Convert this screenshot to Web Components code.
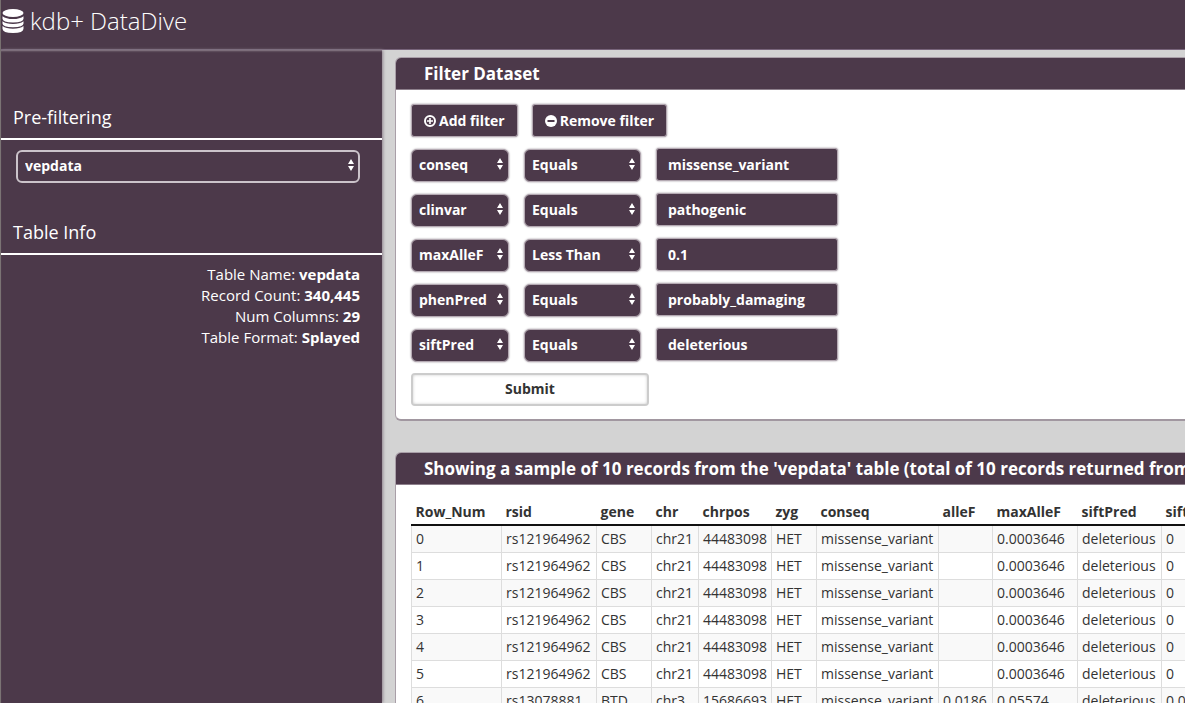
<!DOCTYPE html>
<html lang="en">
<head>
<meta charset="utf-8">
<title>kdb+ DataDive</title>
<style>
  html, body { margin: 0; height: 100%; }
  body { overflow: hidden; font-family: "Open Sans", sans-serif; font-size: 14px; --plum: #4c394a; --line: #b5aab3; --glow: 0 0 2px #8d808c; }
</style>
</head>
<body>
<data-dive></data-dive>
<script>
const define = (name, html, setup) => {
  const template = document.createElement('template');
  template.innerHTML = html;
  customElements.define(name, class extends HTMLElement {
    constructor() {
      super();
      this.attachShadow({ mode: 'open' }).append(template.content.cloneNode(true));
    }
    connectedCallback() { if (setup) setup(this, this.shadowRoot); }
  });
};

define('app-header', `
<style>
  :host { display: block; background: var(--plum); color: #fff; border-bottom: 1px solid #77647a; }
  h1 { display: flex; align-items: center; gap: 6px; margin: 0; padding: 4px 1px 12px; font-size: 24px; line-height: 33px; font-weight: 300; }
  svg { display: block; width: 22px; height: 26px; }
</style>
<h1>
  <svg viewBox="0 0 22 26" fill="#fff" aria-hidden="true">
    <ellipse cx="11" cy="5" rx="10.5" ry="4"/>
    <path d="M.5 8.200q3.500 2.800 10.500 2.800t10.500-2.800v2.600q0 3.700-10.500 3.700T.5 10.800z"/>
    <path d="M.5 13.200q3.500 2.700 10.500 2.700t10.500-2.700v2.400q0 3.700-10.500 3.700T.5 15.600z"/>
    <path d="M.5 18q3.500 2.700 10.500 2.700T21.500 18v2.800q0 4.200-10.500 4.200T.5 20.800z"/>
  </svg>
  <slot></slot>
</h1>`);

define('side-section', `
<style>
  :host { display: block; }
  h2 { margin: 0; padding: 0 12px 9px; font-size: 18px; line-height: 24px; font-weight: 400; border-bottom: 2px solid #fff; }
</style>
<h2><slot name="title"></slot></h2>
<slot></slot>`);

define('pick-list', `
<style>
  :host { display: block; position: relative; }
  select { appearance: none; display: block; box-sizing: border-box; width: 100%; height: 33px; margin: 0; padding: 0 20px 2px 7px;
    font: 700 14px/20px "Open Sans", sans-serif; color: #fff; background: var(--plum); border: 1px solid var(--line); border-radius: 6px; box-shadow: var(--glow); }
  :host([outlined]) select { border: 2px solid #cbc3ca; box-shadow: none; }
  svg { position: absolute; right: 6px; top: 9px; width: 6px; height: 12px; pointer-events: none; }
</style>
<select></select>
<svg viewBox="0 0 6 12" fill="#fff" aria-hidden="true"><path d="M3 0l3 5H0zM3 12L0 7h6z"/></svg>`,
(host, root) => {
  const select = root.querySelector('select');
  select.setAttribute('aria-label', host.getAttribute('label'));
  select.add(new Option(host.getAttribute('value')));
});

define('filter-row', `
<style>
  :host { display: grid; grid-template-columns: 98px 117px 182px; column-gap: 15px; }
  pick-list { margin-top: 1px; }
  input { box-sizing: border-box; width: 100%; height: 33px; margin: 0; padding: 0 11px 1px;
    font: 700 14px/20px "Open Sans", sans-serif; color: #fff; background: var(--plum); border: 1px solid var(--line); border-radius: 3px; box-shadow: var(--glow); }
</style>
<pick-list label="Column" id="column"></pick-list>
<pick-list label="Comparison" id="test"></pick-list>
<input type="text" aria-label="Value">`,
(host, root) => {
  root.querySelector('input').value = host.getAttribute('value');
});

define('icon-button', `
<style>
  :host { display: block; }
  button { display: flex; align-items: center; gap: 3px; box-sizing: border-box; height: 33px; margin: 0; padding: 0 12px;
    font: 700 14px/20px "Open Sans", sans-serif; color: #fff; background: var(--plum); border: 1px solid var(--line); border-radius: 3px; box-shadow: var(--glow); }
  svg { width: 12px; height: 12px; }
</style>
<button type="button"><svg viewBox="0 0 12 12" aria-hidden="true"></svg><slot></slot></button>`,
(host, root) => {
  root.querySelector('svg').innerHTML = host.getAttribute('icon') === 'plus'
    ? '<circle cx="6" cy="6" r="5" fill="none" stroke="#fff" stroke-width="2"/><path d="M6 3v6M3 6h6" stroke="#fff" stroke-width="1.600"/>'
    : '<circle cx="6" cy="6" r="6" fill="#fff"/><path d="M2.500 6h7" stroke="#4c394a" stroke-width="2"/>';
});

define('data-panel', `
<style>
  :host { display: block; background: #fff; border: 1px solid #a99fa8; border-bottom: 2px solid #a197a0; border-radius: 6px; box-sizing: border-box; overflow: hidden; }
  h2 { margin: 0; padding: 5px 28px; background: var(--plum); color: #fff; font-size: 17px; line-height: 21px; font-weight: 700; white-space: nowrap; border-bottom: 1px solid #8d808c; }
  .body { padding: 14px 15px 13px; }
</style>
<h2><slot name="title"></slot></h2>
<div class="body"><slot></slot></div>`);

define('record-table', `
<style>
  :host { display: block; }
  table { border-collapse: collapse; table-layout: fixed; width: 845px; color: #333; line-height: 20px; }
  th { padding: 3px 4px 2px; text-align: left; font-weight: 700; border-bottom: 2px solid #111; white-space: nowrap; }
  td { height: 26px; padding: 0 4px; border: 1px solid #ddd; white-space: nowrap; }
  tbody tr:nth-child(odd) { background: #f9f9f9; }
</style>
<table><colgroup></colgroup><thead><tr></tr></thead><tbody></tbody></table>`,
(host, root) => {
  const columns = [['Row_Num', 90], ['rsid', 95], ['gene', 55], ['chr', 47], ['chrpos', 73], ['zyg', 45], ['conseq', 122],
    ['alleF', 54], ['maxAlleF', 85], ['siftPred', 84], ['siftScore', 95]];
  for (const [name, width] of columns) {
    const col = document.createElement('col');
    col.style.width = width + 'px';
    root.querySelector('colgroup').append(col);
    const th = document.createElement('th');
    th.scope = 'col';
    th.textContent = name;
    root.querySelector('thead tr').append(th);
  }
  const cbs = ['rs121964962', 'CBS', 'chr21', '44483098', 'HET', 'missense_variant', '', '0.0003646', 'deleterious', '0'];
  const btd = ['rs13078881', 'BTD', 'chr3', '15686693', 'HET', 'missense_variant', '0.0186', '0.05574', 'deleterious', '0.01'];
  [cbs, cbs, cbs, cbs, cbs, cbs, btd].forEach((record, index) => {
    const row = root.querySelector('tbody').insertRow();
    [index, ...record].forEach(value => { row.insertCell().textContent = value; });
  });
});

define('filter-form', `
<style>
  :host { display: block; }
  form { display: grid; gap: 11px; justify-items: start; margin: 0; }
  .actions { display: flex; gap: 14px; }
  .rows { display: grid; gap: 11px; }
  .submit { box-sizing: border-box; width: 238px; height: 33px; margin: 0; padding: 0 0 2px; color: #333; background: #fff;
    font: 700 14px/20px "Open Sans", sans-serif; border: 2px solid #ccc; border-radius: 4px; box-shadow: inset 0 0 3px #ccc; }
</style>
<form>
  <div class="actions">
    <icon-button icon="plus">Add filter</icon-button>
    <icon-button icon="minus">Remove filter</icon-button>
  </div>
  <div class="rows">
    <filter-row column="conseq" test="Equals" value="missense_variant"></filter-row>
    <filter-row column="clinvar" test="Equals" value="pathogenic"></filter-row>
    <filter-row column="maxAlleF" test="Less Than" value="0.1"></filter-row>
    <filter-row column="phenPred" test="Equals" value="probably_damaging"></filter-row>
    <filter-row column="siftPred" test="Equals" value="deleterious"></filter-row>
  </div>
  <button class="submit" type="button">Submit</button>
</form>`,
(host, root) => {
  for (const row of root.querySelectorAll('filter-row')) {
    for (const id of ['column', 'test']) {
      const list = row.shadowRoot.getElementById(id);
      list.shadowRoot.querySelector('option').textContent = row.getAttribute(id);
    }
  }
});

define('data-dive', `
<style>
  :host { display: grid; grid-template: auto 1fr / 381px minmax(0, 1fr); height: 100%; box-sizing: border-box; border-left: 1px solid #77706f; background: #d3d3d3; }
  app-header { grid-column: 1 / -1; }
  aside { background: var(--plum); color: #fff; padding-top: 55px; box-shadow: 1px 0 3px #8d808c, inset 0 2px 2px -1px #8d808c; z-index: 1; }
  .source { margin: 10px 22px 37px 15px; }
  dl { margin: 9px 22px 0 0; font-size: 15px; line-height: 21px; text-align: right; }
  dt, dd { display: inline; margin: 0; }
  dd { font-weight: 700; }
  main { overflow: hidden; padding: 7px 0 0 13px; }
  .panels { display: grid; gap: 31px; width: max-content; min-width: 100%; }
</style>
<app-header>kdb+ DataDive</app-header>
<aside>
  <side-section>
    <span slot="title">Pre-filtering</span>
    <pick-list class="source" outlined label="Table" value="vepdata"></pick-list>
  </side-section>
  <side-section>
    <span slot="title">Table Info</span>
    <dl>
      <div><dt>Table Name:</dt> <dd>vepdata</dd></div>
      <div><dt>Record Count:</dt> <dd>340,445</dd></div>
      <div><dt>Num Columns:</dt> <dd>29</dd></div>
      <div><dt>Table Format:</dt> <dd>Splayed</dd></div>
    </dl>
  </side-section>
</aside>
<main>
  <div class="panels">
    <data-panel>
      <span slot="title">Filter Dataset</span>
      <filter-form></filter-form>
    </data-panel>
    <data-panel>
      <span slot="title">Showing a sample of 10 records from the 'vepdata' table (total of 10 records returned from</span>
      <record-table></record-table>
    </data-panel>
  </div>
</main>`);
</script>
</body>
</html>
